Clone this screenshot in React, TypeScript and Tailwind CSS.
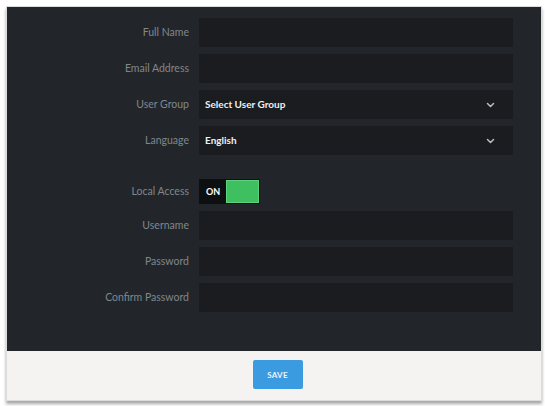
import React from 'react'
import { ChevronDown } from 'lucide-react'

const font = { fontFamily: 'Lato, "Open Sans", sans-serif' }

const Label = ({ children }: { children: React.ReactNode }) => (
  <div className="w-[184px] shrink-0 pr-[2px] text-right text-[10.5px] text-[#80868c]">
    {children}
  </div>
)

const TextRow = ({ label }: { label: string }) => (
  <div className="flex h-[29px] items-center">
    <Label>{label}</Label>
    <div className="ml-[8px] h-full w-[314px] bg-[#1a1c1f]" />
  </div>
)

const SelectRow = ({ label, value }: { label: string; value: string }) => (
  <div className="flex h-[29px] items-center">
    <Label>{label}</Label>
    <div className="ml-[8px] flex h-full w-[314px] items-center justify-between bg-[#1a1c1f] pl-[6px] pr-[16px]">
      <span className="text-[10px] font-bold text-[#eef0f2]">{value}</span>
      <ChevronDown className="h-[12px] w-[13px] text-[#b9bdc1]" strokeWidth={3} />
    </div>
  </div>
)

export default function App() {
  return (
    <div className="min-h-screen bg-white pl-[6px] pt-[6px]" style={font}>
      <div className="w-[536px] border border-[#dcdcdc] shadow-[0_3px_3px_rgba(0,0,0,0.35)]">
        {/* Form */}
        <div className="flex h-[344px] flex-col gap-[7px] bg-[#22262a] pt-[11px]">
          <TextRow label="Full Name" />
          <TextRow label="Email Address" />
          <SelectRow label="User Group" value="Select User Group" />
          <SelectRow label="Language" value="English" />

          <div className="mt-[17px] flex h-[25px] items-center">
            <Label>Local Access</Label>
            <div className="ml-[8px] flex h-full w-[61px] items-center bg-[#0e0f11] p-[1px]">
              <span className="w-[24px] pl-[2px] text-center text-[9px] font-bold text-white">ON</span>
              <div className="ml-auto h-full w-[33px] border border-[#5fd27f] bg-[#3ec060]" />
            </div>
          </div>

          <TextRow label="Username" />
          <TextRow label="Password" />
          <TextRow label="Confirm Password" />
        </div>

        {/* Footer */}
        <div className="flex h-[49px] items-start justify-center bg-[#f5f3f2] pl-[7px] pt-[9px]">
          <button className="h-[29px] w-[50px] rounded-[2px] bg-[#3b9be0] text-[8px] font-bold tracking-[0.3px] text-[#eaf4fb]">
            SAVE
          </button>
        </div>
      </div>
    </div>
  )
}
